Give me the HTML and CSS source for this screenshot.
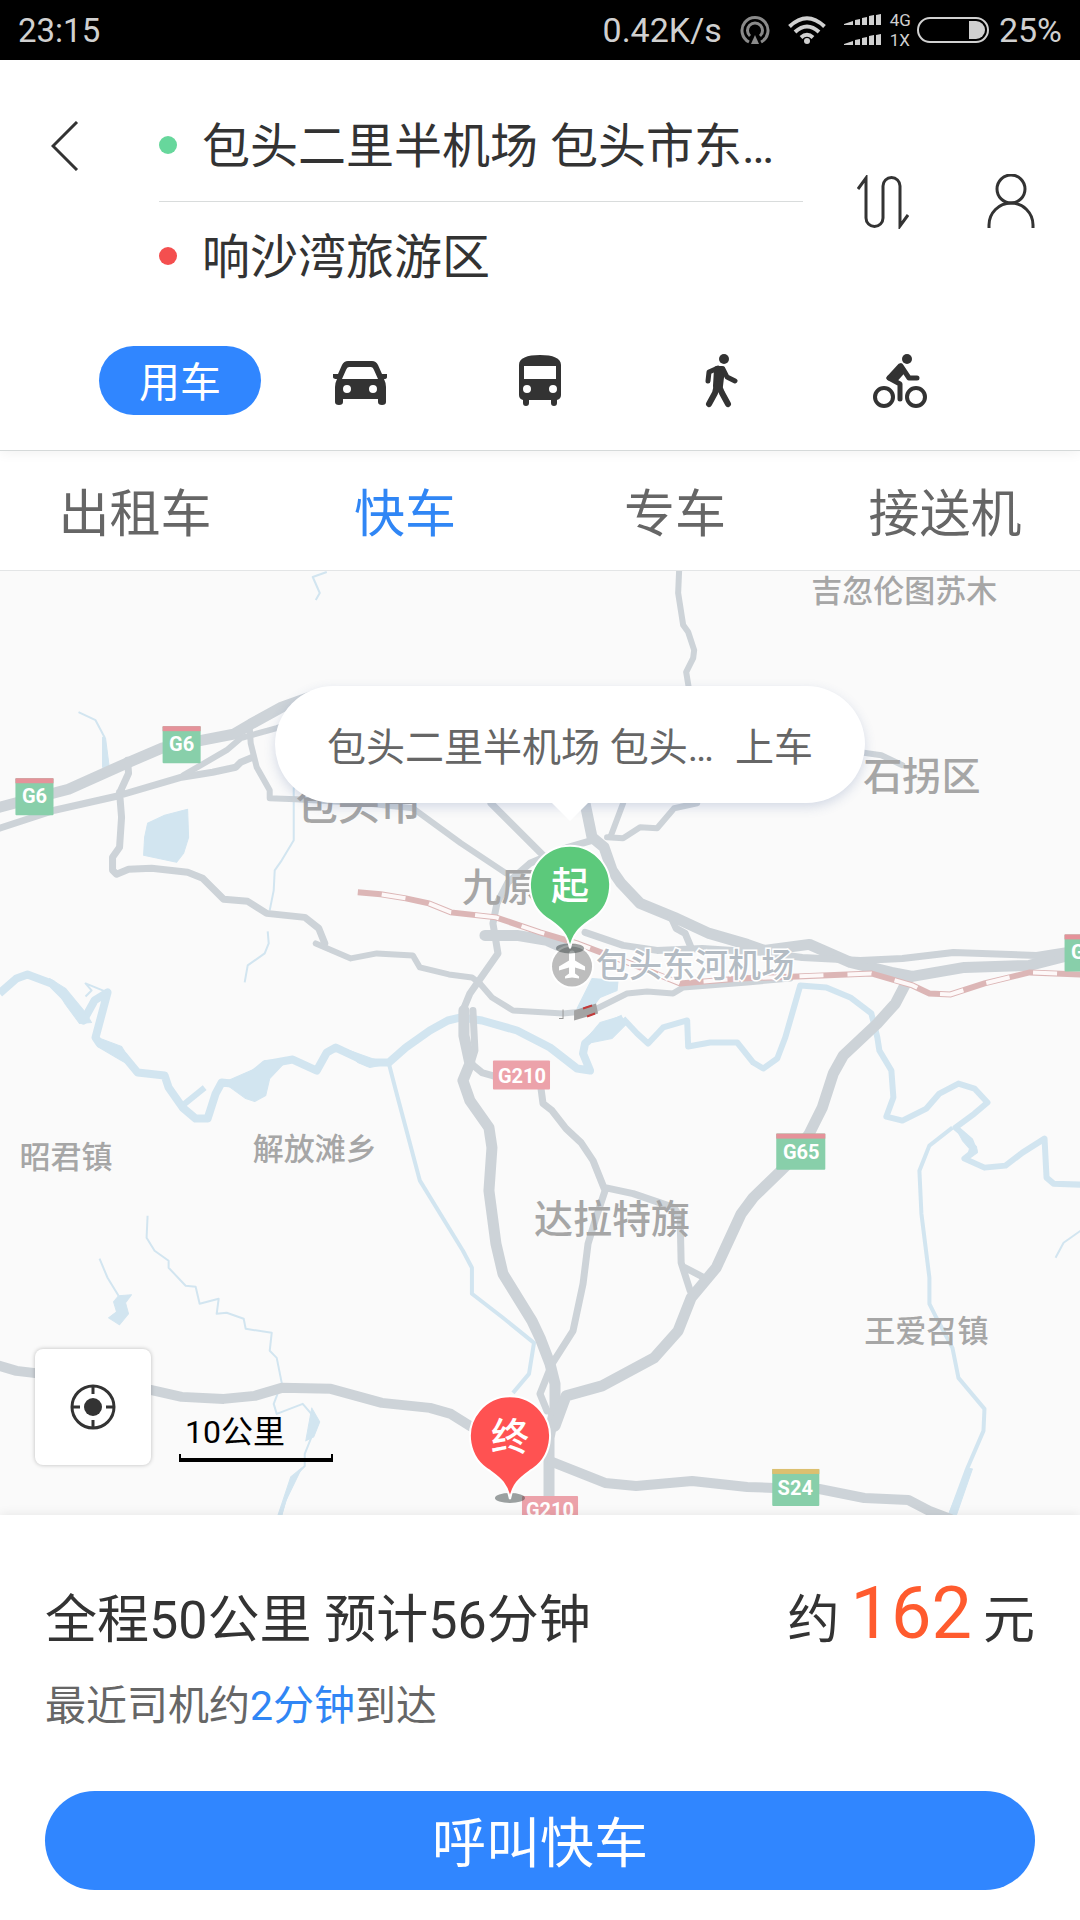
FILE: index.html
```html
<!DOCTYPE html>
<html lang="zh-CN">
<head>
    <meta charset="UTF-8">
    <meta name="viewport" content="width=device-width, initial-scale=1">
    <title>用车</title>
    <link rel="stylesheet" href="styles.css">
</head>
<body>
    <div class="statusbar">
        <span class="clock">23:15</span>
        <span class="speed">0.42K/s</span>
        <svg class="hotspot" width="30" height="30" viewBox="0 0 30 30" fill="none" stroke="#8a8a8a" stroke-width="3">
            <path d="M9 27A13 13 0 1 1 21 27"/>
            <path d="M10 21A7.500 7.500 0 1 1 20 21"/>
            <path d="M15 20l4 9h-8z" fill="#8a8a8a" stroke="none"/>
        </svg>
        <svg class="wifi" width="38" height="28" viewBox="0 0 38 28" fill="none" stroke="#d0d0d0" stroke-width="4">
            <path d="M1.500 10.500Q19-6 36.500 10.500"/>
            <path d="M7 16Q19 5 31 16"/>
            <path d="M13 21.500Q19 16 25 21.500"/>
            <circle cx="19" cy="25" r="3" fill="#d0d0d0" stroke="none"/>
        </svg>
        <svg class="signal" width="38" height="32" viewBox="0 0 38 32" fill="#d0d0d0">
            <path id="bars" d="M0 11V10L9 7v4zM11 11V6l5-1v6zM18 11V4l5-1v8zM25 11V2l5-1v10zM32 11V1l5-1v11z"/>
            <use href="#bars" y="20"/>
        </svg>
        <span class="network"><span>4G</span><span>1X</span></span>
        <svg class="battery" width="72" height="26" viewBox="0 0 72 26" fill="none">
            <rect x="1" y="1" width="70" height="24" rx="12" stroke="#d0d0d0" stroke-width="2"/>
            <path d="M52 4h7a9 9 0 0 1 0 18h-7z" fill="#d0d0d0"/>
        </svg>
        <span class="percent">25%</span>
    </div>

    <header class="header">
        <div class="route">
            <button class="icon-button back" aria-label="返回">
                <svg width="28" height="50" viewBox="0 0 28 50" fill="none" stroke="#333" stroke-width="3"><path d="M26 1L2 25l24 24"/></svg>
            </button>
            <div class="places">
                <button class="place start">包头二里半机场 包头市东…</button>
                <button class="place end">响沙湾旅游区</button>
            </div>
            <button class="icon-button swap" aria-label="交换起终点">
                <svg width="52" height="54" viewBox="0 0 52 54" fill="none" stroke="#333" stroke-width="3"><path d="M1 14L9 3v40a8.500 8.500 0 0 0 17 0V11a8.500 8.500 0 0 1 17 0v40l8-11"/></svg>
            </button>
            <button class="icon-button user" aria-label="个人中心">
                <svg width="48" height="56" viewBox="0 0 48 56" fill="none" stroke="#333" stroke-width="3"><circle cx="24" cy="15" r="14"/><path d="M2 54V51a22 22 0 0 1 44 0v3"/></svg>
            </button>
        </div>
        <nav class="modes">
            <button class="mode active">用车</button>
            <button class="mode" aria-label="驾车">
                <svg width="60" height="60" viewBox="0 0 60 60" fill="#333"><path fill-rule="evenodd" d="M18 10h24q4 0 6 4l4 9h5v3q0 2-3 2 2 4 2 8v15q0 3-4 3t-4-3v-3H13v3q0 3-4 3t-4-3V36q0-4 2-8-4 0-4-2v-3h5l4-9q2-4 6-4zM19 16q-2 0-3 3l-4 9h36l-4-9q-1-3-3-3zM17 34a4 4 0 1 0 0 8a4 4 0 0 0 0-8zM43 34a4 4 0 1 0 0 8a4 4 0 0 0 0-8z"/></svg>
            </button>
            <button class="mode" aria-label="公交">
                <svg width="60" height="60" viewBox="0 0 60 60" fill="#333"><path fill-rule="evenodd" d="M9 14C9 7 17 4 30 4s21 3 21 10v30q0 4-4 5v3q0 3-3 3t-3-3v-3H19v3q0 3-3 3t-3-3v-3q-4-1-4-5zM14 15v13h32V15zM17 34a4 4 0 1 0 0 8a4 4 0 0 0 0-8zM43 34a4 4 0 1 0 0 8a4 4 0 0 0 0-8z"/></svg>
            </button>
            <button class="mode" aria-label="步行">
                <svg width="60" height="60" viewBox="0 0 60 60" fill="none" stroke="#333" stroke-linecap="round" stroke-linejoin="round"><circle cx="34" cy="8" r="5" fill="#333" stroke="none"/><path fill="#333" stroke-width="6" d="M27 18h5l-2 17h-4z"/><path stroke-width="5" d="M28 17l-9 4-1 9M33 18l4 8 8 4"/><path stroke-width="6" d="M27 34l-2 8-6 11M28 33l4 9 6 11"/></svg>
            </button>
            <button class="mode" aria-label="骑行">
                <svg width="60" height="60" viewBox="0 0 60 60" fill="none" stroke="#333" stroke-linecap="round" stroke-linejoin="round"><circle cx="37" cy="8" r="5" fill="#333" stroke="none"/><circle cx="14" cy="46" r="9" stroke-width="4"/><circle cx="46" cy="46" r="9" stroke-width="4"/><path fill="#333" stroke-width="5" d="M30 15L19 27l6 2 8-9z"/><path stroke-width="5" d="M31 15l8 12h8M19 27l11 6v15"/></svg>
            </button>
        </nav>
    </header>

    <nav class="services">
        <button class="service">出租车</button>
        <button class="service active">快车</button>
        <button class="service">专车</button>
        <button class="service">接送机</button>
    </nav>

    <main class="map">
        <svg class="canvas" viewBox="0 571 1080 943" preserveAspectRatio="xMidYMid slice">
            <!-- rivers and lakes -->
            <g class="water">
                <path class="w8" d="M0 993L17 978L28 974L52 983L72 1003L84 1020L95 1000L108 992L96 1037L100 1043L124 1055L138 1072L165 1075L169 1087L183 1107L196 1118L208 1118L216 1093L222 1082L241 1084L265 1064L293 1059L317 1070L327 1052L336 1047L368 1062L389 1062L406 1047L430 1030L448 1020L461 1017L482 1020L517 1030L550 1047L577 1068L590 1070L583 1053L585 1043L603 1027L623 1018"/>
                <path class="w5" d="M184 1104L205 1087M623 1018L637 1033L648 1043L663 1027L687 1020L688 1046L710 1042L737 1042L753 1062L763 1068L777 1058L785 1037L800 985L826 987L850 997L871 1013L877 1037L879 1050L891 1070L893 1097L886 1116L902 1120L926 1108L939 1093L958 1083L974 1088L987 1102L974 1113L955 1127L970 1140L974 1150L964 1158L984 1167L1005 1165L1022 1152L1044 1138L1046 1177L1053 1183L1080 1184"/>
                <path class="fill" d="M224 1082L256 1068L265 1060L288 1059L270 1078L266 1095L255 1101L246 1098zM585 1040L600 1022L620 1016L628 1022L612 1038L592 1042zM98 1037L122 1046L136 1068L120 1059L98 1046zM344 1048L372 1058L390 1063L370 1067L358 1062zM50 978L66 988L86 1012L92 1022L80 1023L66 1004z"/>
                <path class="fill" d="M188 809L189 837L184 853L177 862L144 855L145 837L148 823L165 815zM592 978L618 980L617 990L600 997L590 1010L577 1008zM119 1295L132 1294L126 1302L129 1313L120 1324L109 1317L117 1311L114 1301zM103 737L106 738L110 769L103 767z"/>
                <path class="fill" d="M955 1127L976 1146L977 1152L966 1160L969 1148L962 1140zM312 1407L320 1421L314 1436L306 1440zM291 1476L302 1467L286 1500L282 1515L278 1515zM967 1467L972 1468L956 1514L948 1514z"/>
                <path class="w3" d="M952 1127L929 1145L919 1170L921 1213L929 1277L929 1303L936 1317L952 1347L958 1377L984 1408L983 1430L967 1467L950 1513M389 1063L396 1090L420 1180L463 1250L472 1267L472 1293L503 1317L534 1342L529 1373L513 1392"/>
                <path class="w2" d="M148 1215L147 1237L155 1250L169 1260L169 1267L186 1285L196 1286L200 1303L219 1298L217 1313L227 1312L244 1318L246 1328L272 1332L270 1350L277 1357L282 1382L274 1403L277 1413L303 1403L315 1417L313 1433L305 1453L305 1465L293 1477L281 1515M100 1258L108 1277L119 1295M1080 1230L1063 1242L1055 1257"/>
                <path class="w2" d="M79 712L96 720L105 737L105 763M294 787L294 840L282 860L275 870L274 890L270 910M268 931L269 943L265 953L248 965L245 982M327 572L313 577L320 593L316 600M108 992L86 983L92 990L86 996"/>
            </g>

            <!-- roads -->
            <g class="road">
                <path class="w11" d="M0 807L15 803L69 789L127 763L162 748L203 740L234 734L251 724L282 707L310 697"/>
                <path class="w7" d="M0 828L55 810L117 796L182 777L213 772L236 767L241 762L253 757M120 792L122 817L120 847L113 857L113 870L117 874L129 869L152 868L188 872L203 878L224 899L248 901L267 913L305 917L319 928L325 943M128 760L129 773L119 795"/>
                <path class="w5" d="M184 775L227 750L241 738L277 728L300 720M250 727L251 743L257 767L270 790L270 798L296 799L365 803L413 808L461 843L506 873"/>
                <path class="w5" d="M316 943L351 958L377 953L413 955L420 967L449 974L472 977L480 983L492 997L513 1010L563 1013L593 1010L627 993L647 991L673 993L683 987L747 982L790 978"/>
                <path class="w7" d="M491 803L560 872M530 863L568 847L592 840M530 863L508 882L497 903L493 923L498 953L470 993L463 1010"/>
                <path class="w11" d="M585 803L592 837L604 847L612 870L621 883L640 903L674 917L709 933L747 944L764 950L809 944L850 962L891 972L912 976L964 967L1029 965L1080 952"/>
                <path class="w7" d="M585 932L623 945L657 950L702 948L764 952L802 957L860 960L902 958L953 952L1036 955L1080 948M671 917L676 928L685 933L690 945"/>
                <path class="w5" d="M623 803L611 835M697 803L674 808L657 828L640 827L623 838L607 837M679 570L678 593L683 625L688 632L694 650L693 658L686 672L689 690M860 752L881 755L902 765"/>
                <path class="w11" d="M485 935L517 935L547 940L565 948M464 1010L464 1035L470 1063L463 1080L470 1100L489 1127L492 1147L489 1190L496 1243L503 1273L532 1320L540 1337L550 1363L555 1383L555 1407L549 1437L549 1495"/>
                <path class="w7" d="M473 1010L475 1050L471 1063L482 1072L496 1076M541 1088L543 1103L552 1110L566 1128L581 1142L593 1160L605 1190L595 1220L588 1243L583 1283L573 1330L552 1363L540 1393L547 1410M605 1187L633 1193L674 1207L680 1217L681 1262L690 1290M685 1267L704 1277"/>
                <path class="w11" d="M908 978L895 1003L877 1023L843 1055L833 1073L822 1107L809 1133L788 1163L753 1197L741 1213L716 1267L691 1297L678 1330L654 1357L602 1385L566 1395L555 1425"/>
                <path class="w9" d="M0 1365L17 1370L34 1372L151 1389L182 1396L224 1398L255 1395L282 1387L331 1388L382 1402L430 1407L451 1413L475 1428M552 1461L605 1482L636 1485L692 1480L747 1486L774 1487L819 1488L864 1497L908 1499L929 1510L950 1518"/>
            </g>

            <!-- railway -->
            <path class="rail" d="M358 892L381 894L406 898L429 903L451 912L496 917L540 932L577 943L630 963L653 972L680 983L740 978L797 976L871 973L912 985L929 993L950 994L984 983L1029 972L1080 974"/>
            <path class="rail-gap" d="M358 892L381 894L406 898L429 903L451 912L496 917L540 932L577 943L630 963L653 972L680 983L740 978L797 976L871 973L912 985L929 993L950 994L984 983L1029 972L1080 974"/>
            <path class="rail-thin" d="M578 1524L612 1530L578 1526"/>
            <path d="M574 1010L596 1003L598 1013L574 1020z" fill="#a3a3a3"/>
            <path d="M583 1008L592 1005M587 1016L595 1013" stroke="#c23a3a" stroke-width="2"/>
            <path d="M563 1009v9h-4" stroke="#999" fill="none"/>

            <g class="label">
                <text x="811" y="602" class="town">吉忽伦图苏木</text>
                <text x="863" y="790" class="district">石拐区</text>
                <text x="296" y="820" class="city">包头市</text>
                <text x="462" y="901" class="district">九原</text>
                <text x="596" y="977" class="airport">包头东河机场</text>
                <text x="253" y="1159" class="town">解放滩乡</text>
                <text x="20" y="1167" class="town">昭君镇</text>
                <text x="534" y="1232" class="district">达拉特旗</text>
                <text x="864" y="1341" class="town">王爱召镇</text>
            </g>

            <g class="badge">
                <rect x="163" y="726" width="38" height="37" rx="1" fill="#88cfaa"/><rect x="163" y="726" width="38" height="5" fill="#e5929a"/><text x="182" y="751">G6</text>
                <rect x="16" y="778" width="38" height="37" rx="1" fill="#88cfaa"/><rect x="16" y="778" width="38" height="5" fill="#e5929a"/><text x="35" y="803">G6</text>
                <rect x="1064" y="934" width="38" height="37" rx="1" fill="#88cfaa"/><rect x="1064" y="934" width="38" height="5" fill="#e5929a"/><text x="1083" y="959">G6</text>
                <rect x="776" y="1133" width="49" height="36" rx="1" fill="#88cfaa"/><rect x="776" y="1133" width="49" height="5" fill="#e5929a"/><text x="801" y="1158">G65</text>
                <rect x="772" y="1468" width="47" height="37" rx="1" fill="#88cfaa"/><rect x="772" y="1468" width="47" height="5" fill="#dcc070"/><text x="795" y="1494">S24</text>
                <rect x="493" y="1060" width="57" height="29" rx="1" fill="#eca2aa"/><text x="522" y="1082">G210</text>
                <rect x="522" y="1495" width="56" height="29" rx="1" fill="#eca2aa"/><text x="550" y="1516">G210</text>
            </g>

            <circle cx="572" cy="966" r="22" fill="#fff"/>
            <circle cx="572" cy="966" r="20" fill="#bdbdbd"/>
            <path d="M572 950q3 0 3 4v6l10 6v4l-10-3v6l4 3v2l-7-1-7 1v-2l4-3v-6l-10 3v-4l10-6v-6q0-4 3-4z" fill="#fff"/>

            <g class="pin">
                <ellipse cx="570" cy="948" rx="14" ry="5"/>
                <path fill="#5cc97b" d="M570 948C567 933 561 928 550 920A40 40 0 1 1 590 920C579 928 573 933 570 948z"/>
                <text x="570" y="899">起</text>
            </g>
            <g class="pin">
                <ellipse cx="510" cy="1497" rx="15" ry="5"/>
                <path fill="#ff5252" d="M510 1498C507 1483 501 1478 490 1470A40 40 0 1 1 530 1470C519 1478 513 1483 510 1498z"/>
                <text x="510" y="1449">终</text>
            </g>
        </svg>

        <button class="bubble"><span>包头二里半机场 包头…</span><span>上车</span></button>

        <div class="map-tools">
            <button class="locate" aria-label="定位">
                <svg width="46" height="46" viewBox="0 0 46 46" fill="none" stroke="#333" stroke-width="3"><circle cx="23" cy="23" r="21"/><circle cx="23" cy="23" r="9" fill="#333" stroke="none"/><path d="M23 2v8M23 36v8M2 23h8M36 23h8"/></svg>
            </button>
            <div class="scale">10公里</div>
        </div>
    </main>

    <section class="order">
        <div class="summary">
            <h1>全程50公里 预计56分钟</h1>
            <p class="price">约<strong>162</strong>元</p>
        </div>
        <p class="arrival">最近司机约<em>2分钟</em>到达</p>
        <button class="call">呼叫快车</button>
    </section>
</body>
</html>
```
FILE: styles.css
```css
* {
    box-sizing: border-box;
}

body {
    margin: 0;
    min-height: 100vh;
    display: flex;
    flex-direction: column;
    background-color: #fff;
    color: #333;
    font-family: Roboto, "Noto Sans CJK SC", sans-serif;
}

button {
    margin: 0;
    padding: 0;
    border: none;
    background: none;
    color: inherit;
    font: inherit;
    cursor: pointer;
}

svg {
    display: block;
}

/* status bar */
.statusbar {
    display: flex;
    align-items: center;
    height: 60px;
    padding: 0 18px;
    background-color: #000;
    color: #d0d0d0;
    font-size: 34px;
}

.clock {
    margin-right: auto;
    font-size: 33px;
}

.hotspot {
    margin-left: 18px;
}

.wifi {
    margin-left: 18px;
}

.signal {
    margin-left: 18px;
}

.network {
    display: flex;
    flex-direction: column;
    margin: 0 6px 0 8px;
    font-size: 17px;
    line-height: 20px;
}

.percent {
    margin-left: 10px;
}

/* start and end of the trip */
.header {
    position: relative;
    z-index: 1;
    height: 391px;
    padding-top: 31px;
    border-bottom: 1px solid #d5d9d9;
    box-shadow: 0 2px 12px rgba(0, 0, 0, 0.06);
}

.route {
    display: flex;
    align-items: center;
    padding: 0 45px 0 51px;
}

.back {
    align-self: flex-start;
    padding: 30px 0;
}

.places {
    flex: 1;
    margin: 0 54px 0 80px;
}

.place {
    position: relative;
    display: block;
    width: 100%;
    height: 111px;
    padding-left: 43px;
    font-size: 48px;
    line-height: 112px;
    text-align: left;
    white-space: nowrap;
    overflow: hidden;
}

.place::before {
    content: "";
    position: absolute;
    left: 0;
    top: 45px;
    width: 18px;
    height: 18px;
    border-radius: 50%;
}

.start {
    border-bottom: 1px solid #d9dcdc;
}

.start::before {
    background-color: #67d79c;
}

.end::before {
    background-color: #f44f4f;
}

.user {
    margin-left: 78px;
}

.modes {
    display: grid;
    grid-template-columns: repeat(5, 1fr);
    align-items: center;
    justify-items: center;
    height: 69px;
    margin-top: 33px;
    padding: 0 90px;
}

.mode.active {
    width: 162px;
    height: 69px;
    padding-bottom: 4px;
    border-radius: 35px;
    background-color: #3086ff;
    color: #fff;
    font-size: 41px;
}

.services {
    display: grid;
    grid-template-columns: repeat(4, 1fr);
    height: 120px;
    border-bottom: 1px solid #e3e5e6;
}

.service {
    padding-bottom: 2px;
    color: #666;
    font-size: 51px;
}

.service.active {
    color: #3086f5;
}

/* map */
.map {
    position: relative;
    flex: 1;
    min-height: 600px;
    overflow: hidden;
    background-color: #fafafa;
}

.canvas {
    position: absolute;
    width: 100%;
    height: 100%;
}

.water path {
    fill: none;
    stroke: #d2e5f0;
    stroke-linejoin: round;
}

.water .fill {
    fill: #d2e5f0;
}

.road path {
    fill: none;
    stroke: #cdd3d8;
    stroke-linejoin: round;
    stroke-linecap: round;
}

.map .w2 { stroke-width: 2px; }
.map .w3 { stroke-width: 4px; }
.map .w5 { stroke-width: 6px; }
.map .w7 { stroke-width: 7px; }
.map .w8 { stroke-width: 8px; }
.map .w9 { stroke-width: 10px; }
.map .w11 { stroke-width: 11px; }

.rail,
.rail-gap,
.rail-thin {
    fill: none;
    stroke: #dcb6b6;
    stroke-width: 6px;
}

.rail-gap {
    stroke: #fdf8f8;
    stroke-width: 4px;
    stroke-dasharray: 24px;
    stroke-dashoffset: 24px;
}

.rail-thin {
    stroke-width: 1px;
}

.label {
    fill: #a6a6a6;
    font-weight: 500;
}

.town {
    font-size: 31px;
}

.district {
    font-size: 39px;
}

.city {
    font-size: 42px;
}

.airport {
    fill: #b4bcc4;
    stroke: #fff;
    stroke-width: 3px;
    paint-order: stroke;
    font-size: 33px;
}

.badge text {
    fill: #fff;
    font-size: 20px;
    font-weight: 700;
    text-anchor: middle;
}

.pin ellipse {
    fill: rgba(60, 70, 70, 0.5);
}

.pin path {
    stroke: #fff;
    stroke-width: 2px;
}

.pin text {
    fill: #fff;
    font-size: 38px;
    font-weight: 500;
    text-anchor: middle;
}

.bubble {
    position: absolute;
    top: 115px;
    left: calc(50% + 30px);
    transform: translateX(-50%);
    display: flex;
    justify-content: space-between;
    align-items: center;
    width: 590px;
    height: 117px;
    padding: 0 52px 2px;
    border-radius: 59px;
    background-color: #fff;
    box-shadow: 0 4px 12px rgba(60, 90, 150, 0.2);
    color: #666;
    font-size: 39px;
    white-space: nowrap;
}

.bubble::after {
    content: "";
    position: absolute;
    left: 50%;
    top: 100%;
    margin-left: -18px;
    border: 18px solid transparent;
    border-top-color: #fff;
    border-bottom: none;
}

.map-tools {
    position: absolute;
    left: 35px;
    bottom: 50px;
    display: flex;
    align-items: flex-end;
    gap: 28px;
}

.locate {
    display: flex;
    align-items: center;
    justify-content: center;
    width: 116px;
    height: 116px;
    border-radius: 8px;
    background-color: #fff;
    box-shadow: 0 0 4px rgba(0, 0, 0, 0.25);
}

.scale {
    position: relative;
    width: 154px;
    height: 52px;
    margin-bottom: 3px;
    padding-left: 6px;
    border-bottom: 4px solid #000;
    color: #000;
    font-size: 32px;
    line-height: 44px;
}

.scale::after {
    content: "";
    position: absolute;
    left: 0;
    right: 0;
    bottom: 0;
    height: 4px;
    border: solid #000;
    border-width: 0 2px;
}

/* order sheet */
.order {
    position: relative;
    padding: 49px 45px 30px;
    background-color: #fff;
    box-shadow: 0 -1px 10px rgba(0, 0, 0, 0.08);
}

.summary {
    display: flex;
    justify-content: space-between;
    align-items: baseline;
    height: 100px;
}

.summary h1 {
    margin: 0;
    font-size: 52px;
    font-weight: 400;
    line-height: 100px;
}

.price {
    margin: 0;
    font-size: 52px;
    line-height: 100px;
}

.price strong {
    margin: 0 11px;
    color: #ff5b2e;
    font-size: 72px;
    font-weight: 400;
}

.arrival {
    margin: 12px 0 55px;
    color: #666;
    font-size: 41px;
    line-height: 60px;
}

.arrival em {
    color: #3086f5;
    font-style: normal;
}

.call {
    display: block;
    width: 100%;
    height: 99px;
    padding-bottom: 2px;
    border-radius: 50px;
    background-color: #3086ff;
    color: #fff;
    font-size: 54px;
}
```
